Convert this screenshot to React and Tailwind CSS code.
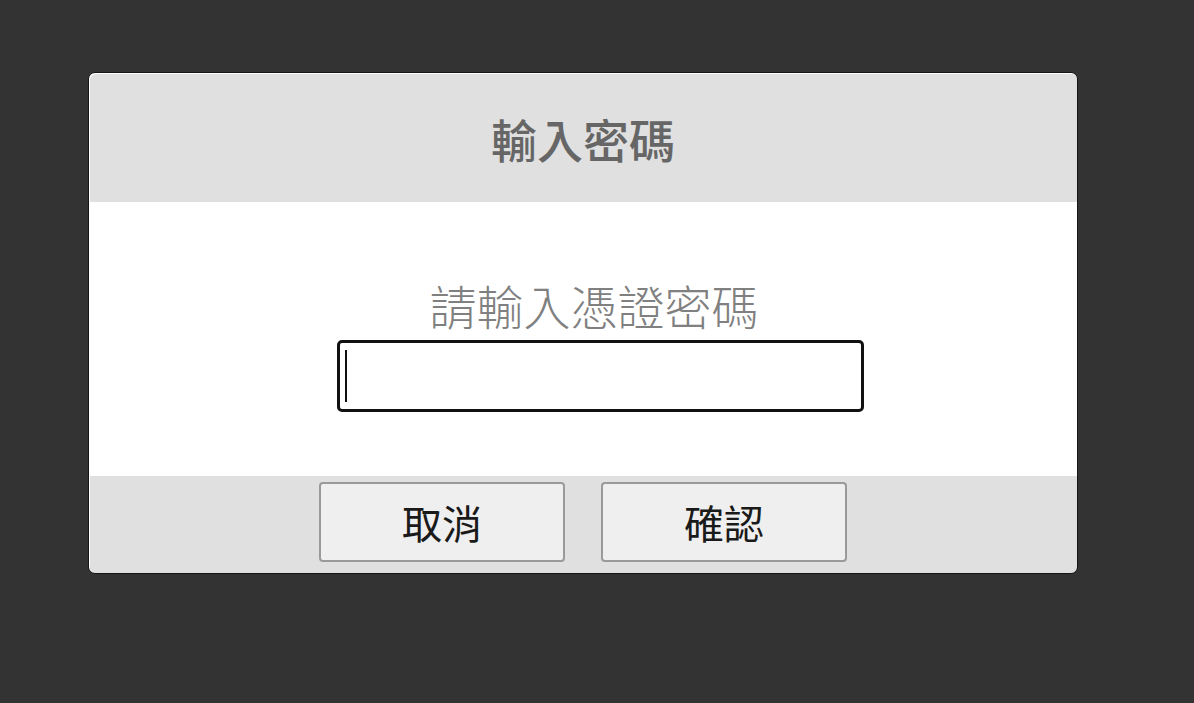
export default function App() {
  return (
    <div
      className="min-h-[703px] w-full bg-[#333333] pt-[72px] pl-[88px]"
      style={{ fontFamily: '"Noto Sans CJK TC", "Noto Sans", sans-serif' }}
    >
      <PasswordDialog />
    </div>
  );
}

function PasswordDialog() {
  return (
    <div className="flex h-[502px] w-[990px] flex-col overflow-hidden rounded-[7px] border border-[#151515] bg-[#e0e0e0] shadow-[inset_1px_1px_0_#ffffff]">
      <div className="flex h-[129px] items-center justify-center">
        <h1 className="text-[46px] font-medium leading-none text-[#666666]">輸入密碼</h1>
      </div>

      <div className="flex h-[274px] flex-col items-center bg-white pt-[72px]">
        <label className="pl-[22px] text-[47px] font-light leading-[62px] text-[#808080]">請輸入憑證密碼</label>
        <div className="mt-[4px] pl-[34px]">
          <div className="flex h-[72px] w-[527px] items-center rounded-[5px] border-[3px] border-[#111111] bg-white px-[5px]">
            <span className="h-[52px] w-[2px] bg-[#111111]" />
          </div>
        </div>
      </div>

      <div className="flex flex-1 justify-center gap-[36px] pt-[6px]">
        <DialogButton label="取消" />
        <DialogButton label="確認" />
      </div>
    </div>
  );
}

function DialogButton({ label }) {
  return (
    <button className="flex h-[80px] w-[246px] items-center justify-center rounded-[4px] border-2 border-[#9a9a9a] bg-[#efefef] text-[40px] leading-none text-[#1a1a1a]">
      {label}
    </button>
  );
}
